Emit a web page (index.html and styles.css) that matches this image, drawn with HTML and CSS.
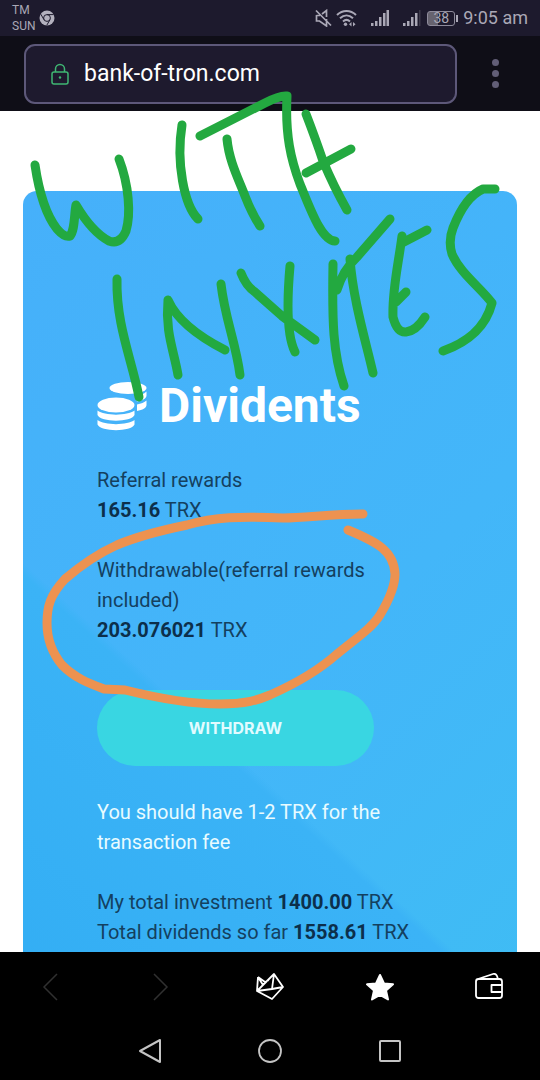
FILE: index.html
```html
<!DOCTYPE html>
<html lang="en">
<head>
    <meta charset="UTF-8">
    <meta name="viewport" content="width=device-width, initial-scale=1.0">
    <title>bank-of-tron.com</title>
    <link rel="stylesheet" href="styles.css">
</head>
<body>
    <div class="screen">
        <div class="status-bar">
            <div class="carrier">TM<br>SUN</div>
            <svg class="chrome-icon" width="16" height="16" viewBox="0 0 16 16">
                <circle cx="8" cy="8" r="7.5" fill="#b3b1be"/>
                <circle cx="8" cy="8" r="3.4" fill="none" stroke="#1e1b2e" stroke-width="1"/>
                <path d="M8 4.6h6.6M5 9.7L1.8 4.2M11 9.7l-3.2 5.5" stroke="#1e1b2e" stroke-width="1" fill="none"/>
            </svg>
            <div class="status-right">
                <svg width="17" height="18" viewBox="0 0 17 18" fill="none" stroke="#aaa8b6" stroke-width="1.7">
                    <path d="M1.5 6v6h3l7 5V10M11.500 8V1.500L7 5M1 1.500l15 15M1.500 6.500h3.500"/>
                </svg>
                <svg class="wifi" width="21" height="18" viewBox="0 0 21 18" fill="none" stroke="#aaa8b6" stroke-width="2">
                    <path d="M1 6c5.500-5.300 13.500-5.300 19 0M4 9.300c4-3.700 9-3.700 13 0M7 12.500c2.200-2 4.800-2 7 0"/>
                    <circle cx="9.500" cy="15.300" r="1.700" fill="#aaa8b6" stroke="none"/>
                    <path d="M15.500 13l-2.500 2.200 2.500 2.200zM17 13l2.500 2.200-2.500 2.200z" fill="#aaa8b6" stroke="none"/>
                </svg>
                <svg class="signal" width="18" height="18" viewBox="0 0 18 18" fill="#aaa8b6">
                    <path d="M0 14h2.500v3H0zM4 12h2.500v5H4zM8 8h2.500v9H8zM12 4h2.500v13H12zM15.500 1H18v16h-2.500z"/>
                </svg>
                <svg class="signal" width="18" height="18" viewBox="0 0 18 18" fill="#aaa8b6">
                    <path d="M0 14h2.500v3H0zM4 12h2.500v5H4zM8 8h2.500v9H8zM12 4h2.500v13H12z"/>
                    <path d="M16 1h1.500v16H16z" fill="#3c394a"/>
                </svg>
                <div class="battery"><span>38</span></div>
                <div class="clock">9:05 am</div>
            </div>
        </div>

        <header class="toolbar">
            <div class="address">
                <label for="url" aria-label="Address">
                    <svg width="18" height="22" viewBox="0 0 18 22" fill="none" stroke="#3fb673" stroke-width="1.500">
                        <rect x="1" y="9" width="16" height="12" rx="2"/>
                        <path d="M4.500 9V6a4.500 4.500 0 0 1 9 0v3"/>
                        <circle cx="9" cy="14.500" r="1.200" fill="#3fb673" stroke="none"/>
                    </svg>
                </label>
                <input type="text" id="url" value="bank-of-tron.com">
            </div>
            <button class="menu" type="button" aria-label="Menu">
                <span></span><span></span><span></span>
            </button>
        </header>

        <main class="page">
            <section class="card">
                <h1>
                    <svg width="50" height="50" viewBox="0 0 50 50" fill="#fff">
                        <ellipse cx="31" cy="7" rx="18.500" ry="6"/>
                        <path d="M38 15c5-.6 9-2 11.500-4.500v4c0 3-4 5-9.500 6zM40 23.500c4-.8 7.500-2 9.500-4v4.500c0 3-4 5-9.500 6z"/>
                        <ellipse cx="19" cy="24" rx="18.500" ry="7.500"/>
                        <path d="M.5 29.500c7 5.500 30 5.500 37 0V34c-3 7.500-34 7.500-37 0zM.5 39c7 5.500 30 5.500 37 0v4.500c-3 7.500-34 7.500-37 0z"/>
                    </svg>
                    Dividents
                </h1>
                <p>Referral rewards<br><b>165.16</b> TRX</p>
                <p>Withdrawable(referral rewards included)<br><b>203.076021</b> TRX</p>
                <button class="withdraw" type="button">WITHDRAW</button>
                <p class="note">You should have 1-2 TRX for the transaction fee</p>
                <p>My total investment <b>1400.00</b> TRX<br>Total dividends so far <b>1558.61</b> TRX</p>
            </section>
        </main>

        <nav class="browser-nav">
            <button type="button" aria-label="Back" disabled>
                <svg width="28" height="28" viewBox="0 0 28 28" fill="none" stroke="#303030" stroke-width="1.500"><path d="M20 1L7 14l13 13"/></svg>
            </button>
            <button type="button" aria-label="Forward" disabled>
                <svg width="28" height="28" viewBox="0 0 28 28" fill="none" stroke="#303030" stroke-width="1.500"><path d="M7 1l13 13L7 27"/></svg>
            </button>
            <button type="button" aria-label="Home">
                <svg width="28" height="28" viewBox="0 0 28 28" fill="none" stroke="#fff" stroke-width="1.800" stroke-linejoin="round">
                    <path d="M2 4l7 5M2 4L1 18l15 8L27 14 18 1 1 18M2 4l5 8M18 1l-2 15M1 18l15-2 11-2M9 9l4-2"/>
                </svg>
            </button>
            <button type="button" aria-label="Bookmarks">
                <svg width="28" height="28" viewBox="0 0 28 28" fill="#fff" stroke="#fff" stroke-width="2" stroke-linejoin="round">
                    <path d="M14 2l4 8.500 9 .8-7 6.200 2 9-8-4.500L6 26.500l2-9-7-6.200 9-.8z"/>
                </svg>
            </button>
            <button type="button" aria-label="Wallet">
                <svg width="28" height="28" viewBox="0 0 28 28" fill="none" stroke="#fff" stroke-width="1.800" stroke-linejoin="round">
                    <rect x="1" y="6" width="26" height="19" rx="2.500"/>
                    <path d="M3 6l15-5q3-.8 4 2l1 3M27 12H16.500v7H27"/>
                </svg>
            </button>
        </nav>

        <nav class="system-nav">
            <button type="button" aria-label="System back">
                <svg width="24" height="26" viewBox="0 0 24 26" fill="none" stroke="#c4c4c4" stroke-width="2" stroke-linejoin="round"><path d="M22 2v22L2 13z"/></svg>
            </button>
            <button type="button" aria-label="System home">
                <svg width="24" height="26" viewBox="0 0 24 26" fill="none" stroke="#c4c4c4" stroke-width="1.800"><circle cx="12" cy="13" r="11"/></svg>
            </button>
            <button type="button" aria-label="Recent apps">
                <svg width="24" height="26" viewBox="0 0 24 26" fill="none" stroke="#c4c4c4" stroke-width="2"><rect x="2" y="3" width="20" height="20" rx="1"/></svg>
            </button>
        </nav>

        <!-- freehand marker strokes drawn over the page -->
        <svg class="marker" viewBox="0 0 540 1080" fill="none" stroke-linecap="round" stroke-linejoin="round">
            <g stroke="#23a940" stroke-width="9">
                <path d="M35 165C39 192 46 215 57 229Q65 238 70 236C75 230 74 215 76 205Q92 232 109 241Q120 245 126 231C131 214 129 185 119 159"/>
                <path d="M182 125C176 162 184 205 198 219"/>
                <path d="M200 136L265 103Q280 95 287 96C285 135 291 160 300 184C310 208 321 240 335 241"/>
                <path d="M227 139C229 161 239 180 245 196Q252 214 260 226"/>
                <path d="M306 114Q316 140 323 161Q334 187 347 210M306 173L351 149"/>
                <path d="M117 279C116 325 132 360 139 397"/>
                <path d="M178 375C174 351 165 332 168 300Q180 327 225 350M221 284C225 319 236 343 240 375"/>
                <path d="M241 273Q246 286 255 292L282 316L315 340M290 266C287 300 286 334 295 352"/>
                <path d="M333 264C332 322 333 354 344 386M350 259C353 300 366 342 373 373M337 290Q343 270 357 257L390 219"/>
                <path d="M427 230L402 243M402 236C398 267 392 290 393 317Q397 333 406 332Q416 331 425 317M396 302L406 292"/>
                <path d="M495 189H483C469 195 460 210 453 228Q448 241 452 254C460 273 481 288 492 303C485 330 465 343 443 351"/>
            </g>
            <path stroke="#ed9250" stroke-width="9" d="M363 514C330 514 306 518 283 518C240 516 215 517 187 525C158 531 136 537 117 545C97 554 79 567 65 579C50 595 47 607 47 623C47 640 53 654 62 665C75 678 88 683 104 689L125 690C157 698 191 704 220 704C246 704 258 700 270 695C297 683 318 671 337 654C355 639 371 629 380 615C389 600 395 585 395 574C394 551 377 542 348 530"/>
        </svg>
    </div>
</body>
</html>
```

FILE: styles.css
```css
* { box-sizing: border-box; }
body { margin: 0; font-family: Roboto, "Liberation Sans", sans-serif; background-color: #000; }
button { background: none; border: none; padding: 0; cursor: pointer; font-family: inherit; }
svg { display: block; flex: none; }
.screen { position: relative; display: flex; flex-direction: column; height: 100vh; overflow: hidden; }

.status-bar { display: flex; align-items: center; gap: 4px; height: 36px; padding: 0 12px; background-color: #1d1a2d; color: #aaa8b6; }
.carrier { font-size: 12px; line-height: 16px; }
.status-right { display: flex; align-items: center; gap: 4px; margin-left: auto; }
.signal { margin-left: 10px; }
.battery { position: relative; width: 28px; height: 15px; margin: 0 4px 0 2px; border: 1px solid #8e8b9b; border-radius: 3px; background: linear-gradient(to right, #66636f 38%, transparent 38%); font-size: 14px; line-height: 13px; text-align: center; }
.battery::after { content: ""; position: absolute; right: -4px; top: 3px; width: 2px; height: 7px; background-color: #aaa8b6; }
.clock { font-size: 18px; line-height: 24px; }

.toolbar { display: flex; align-items: center; height: 75px; padding: 0 24px; background-color: #0f0e17; }
.address { display: flex; align-items: center; gap: 15px; flex: 1; height: 60px; padding: 0 25px; border: 2px solid #5d5879; border-radius: 11px; background-color: #1e1a2e; }
.address input { flex: 1; min-width: 0; padding: 0; border: none; outline: none; background: none; color: #fff; font-family: Roboto, sans-serif; font-size: 23px; }
.menu { display: flex; flex-direction: column; align-items: center; gap: 4px; width: 20px; margin: 0 11px 0 28px; }
.menu span { width: 7px; height: 7px; border-radius: 50%; background-color: #625e77; }

.page { flex: 1; min-height: 0; overflow: hidden; padding: 80px 23px 0; background-color: #fff; }
.card { min-height: 100%; padding: 188px 74px 6px; border-radius: 14px 14px 0 0; color: #14405f; font-size: 20px; line-height: 30px;
    background: linear-gradient(42deg, #33aef4 0%, #3bb3f6 33%, transparent 34%), linear-gradient(135deg, #46b0fa, #43b6f9 60%, #3fbcf4); }
.card h1 { display: flex; align-items: center; gap: 12px; margin: 0 0 32px; color: #fff; font-size: 48px; line-height: 54px; }
.card p { margin: 0 0 30px; }
.card b { color: #0c2f4b; }
.card .note { color: #e8fbff; }
.withdraw { display: block; width: 80%; height: 76px; margin: 45px 0 31px; border-radius: 38px; background-color: #39d6e2; color: #e2fbff; font-family: Inter, sans-serif; font-size: 16px; font-weight: 700; }

.browser-nav { display: flex; align-items: center; justify-content: space-between; height: 70px; padding: 0 37px; background-color: #000; }
.system-nav { display: flex; align-items: center; justify-content: center; gap: 96px; height: 58px; background-color: #000; }

.marker { position: absolute; top: 0; left: 0; width: 100%; height: auto; pointer-events: none; }
```
